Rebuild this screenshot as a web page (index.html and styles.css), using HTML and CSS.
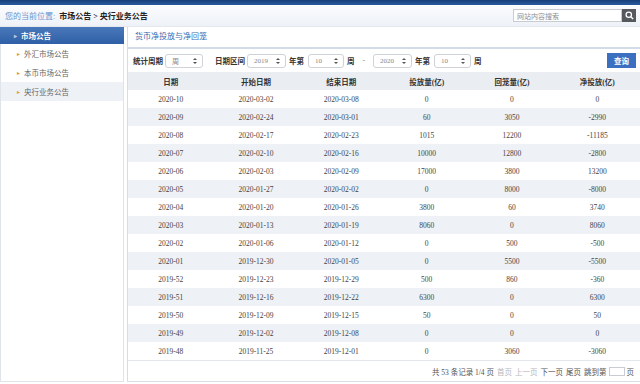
FILE: index.html
```html
<!DOCTYPE html>
<html lang="zh-CN">
<head>
    <meta charset="UTF-8">
    <title>货币净投放与净回笼</title>
    <link rel="stylesheet" href="styles.css">
</head>
<body>
    <div class="topbar"></div>

    <div class="crumbbar">
        <span class="crumb-label">您的当前位置:</span>
        <span class="crumb-path">市场公告 &gt; 央行业务公告</span>
        <div class="search">
            <input type="text" placeholder="网站内容搜索">
            <button class="search-btn">
                <svg width="9" height="9" viewBox="0 0 10 10"><circle cx="4.2" cy="4.2" r="3" fill="none" stroke="#fff" stroke-width="1.4"/><path d="M6.4 6.4 L9 9" stroke="#fff" stroke-width="1.6"/></svg>
            </button>
        </div>
    </div>

    <div class="layout">
        <aside class="sidebar">
            <div class="side-head"><span class="side-arrow">&#9656;</span>市场公告</div>
            <div class="side-item"><span class="bullet">&#9656;</span>外汇市场公告</div>
            <div class="side-item"><span class="bullet">&#9656;</span>本币市场公告</div>
            <div class="side-item current"><span class="bullet">&#9656;</span>央行业务公告</div>
        </aside>

        <main class="panel">
            <div class="panel-head">货币净投放与净回笼</div>

            <div class="filters">
                <span class="lbl">统计周期</span>
                <span class="sel w38">周<i class="spin"></i></span>
                <span class="lbl gap">日期区间</span>
                <span class="sel w39">2019<i class="spin"></i></span>
                <span class="lbl tight">年第</span>
                <span class="sel w36">10<i class="spin"></i></span>
                <span class="lbl tight">周</span>
                <span class="dash">-</span>
                <span class="sel w39">2020<i class="spin"></i></span>
                <span class="lbl tight">年第</span>
                <span class="sel w37">10<i class="spin"></i></span>
                <span class="lbl tight">周</span>
                <button class="query-btn">查询</button>
            </div>

            <table class="data">
                <thead>
                    <tr><th>日期</th><th>开始日期</th><th>结束日期</th><th>投放量(亿)</th><th>回笼量(亿)</th><th>净投放(亿)</th></tr>
                </thead>
                <tbody>
                    <tr><td>2020-10</td><td>2020-03-02</td><td>2020-03-08</td><td>0</td><td>0</td><td>0</td></tr>
                    <tr><td>2020-09</td><td>2020-02-24</td><td>2020-03-01</td><td>60</td><td>3050</td><td>-2990</td></tr>
                    <tr><td>2020-08</td><td>2020-02-17</td><td>2020-02-23</td><td>1015</td><td>12200</td><td>-11185</td></tr>
                    <tr><td>2020-07</td><td>2020-02-10</td><td>2020-02-16</td><td>10000</td><td>12800</td><td>-2800</td></tr>
                    <tr><td>2020-06</td><td>2020-02-03</td><td>2020-02-09</td><td>17000</td><td>3800</td><td>13200</td></tr>
                    <tr><td>2020-05</td><td>2020-01-27</td><td>2020-02-02</td><td>0</td><td>8000</td><td>-8000</td></tr>
                    <tr><td>2020-04</td><td>2020-01-20</td><td>2020-01-26</td><td>3800</td><td>60</td><td>3740</td></tr>
                    <tr><td>2020-03</td><td>2020-01-13</td><td>2020-01-19</td><td>8060</td><td>0</td><td>8060</td></tr>
                    <tr><td>2020-02</td><td>2020-01-06</td><td>2020-01-12</td><td>0</td><td>500</td><td>-500</td></tr>
                    <tr><td>2020-01</td><td>2019-12-30</td><td>2020-01-05</td><td>0</td><td>5500</td><td>-5500</td></tr>
                    <tr><td>2019-52</td><td>2019-12-23</td><td>2019-12-29</td><td>500</td><td>860</td><td>-360</td></tr>
                    <tr><td>2019-51</td><td>2019-12-16</td><td>2019-12-22</td><td>6300</td><td>0</td><td>6300</td></tr>
                    <tr><td>2019-50</td><td>2019-12-09</td><td>2019-12-15</td><td>50</td><td>0</td><td>50</td></tr>
                    <tr><td>2019-49</td><td>2019-12-02</td><td>2019-12-08</td><td>0</td><td>0</td><td>0</td></tr>
                    <tr><td>2019-48</td><td>2019-11-25</td><td>2019-12-01</td><td>0</td><td>3060</td><td>-3060</td></tr>
                </tbody>
            </table>

            <div class="pager">
                <span>共 53 条记录 1/4 页</span>
                <span class="off">首页</span>
                <span class="off">上一页</span>
                <span>下一页</span>
                <span>尾页</span>
                <span>跳到第</span><input type="text" class="jump"><span>页</span>
            </div>
        </main>
    </div>
</body>
</html>
```

FILE: styles.css
```css
body {
    margin: 0;
    width: 640px;
    height: 384px;
    overflow: hidden;
    background: #fff;
    color: #333;
    font-family: "Liberation Serif", "Noto Sans CJK SC", serif;
    font-size: 7.5px;
}
.topbar {
    height: 5px;
    background: linear-gradient(#173f7a, #2a5b9e);
}
.crumbbar {
    height: 22px;
    display: flex;
    align-items: center;
    padding: 0 4px 0 5px;
    background: linear-gradient(#fbfcfe, #eef2f7);
    border-bottom: 1px solid #e4e8ee;
    box-sizing: border-box;
    font-size: 8px;
}
.crumb-label {
    color: #6b93cf;
    margin-right: 4px;
}
.crumb-path {
    font-weight: bold;
    color: #222;
}
.search {
    margin-left: auto;
    display: flex;
    height: 13px;
}
.search input {
    width: 109px;
    height: 13px;
    box-sizing: border-box;
    border: 1px solid #c7ccd3;
    padding: 0 3px;
    font-family: "Noto Sans CJK SC", sans-serif;
    font-size: 7px;
    color: #666;
    outline: none;
}
.search input::placeholder {
    color: #8a8f96;
}
.search-btn {
    width: 14px;
    height: 13px;
    border: none;
    padding: 0;
    background: #55595e;
    display: flex;
    align-items: center;
    justify-content: center;
}
.layout {
    display: flex;
    height: 355px;
}
.sidebar {
    width: 124px;
    box-sizing: border-box;
    border: 1px solid #dfe3ea;
    border-top: none;
}
.side-head {
    height: 17px;
    margin: 0 -1px;
    background: linear-gradient(#4a78bb, #2f5fa5);
    color: #fff;
    font-weight: bold;
    display: flex;
    align-items: center;
    padding-left: 14px;
}
.side-arrow {
    color: #b8cbe8;
    font-size: 6px;
    margin-right: 4px;
}
.side-item {
    height: 19px;
    display: flex;
    align-items: center;
    padding-left: 16px;
    color: #666;
}
.side-item.current {
    background: #eef1f6;
}
.bullet {
    color: #e59b2e;
    font-size: 6px;
    margin-right: 4px;
}
.panel {
    flex: 1;
    margin-left: 3px;
    border-left: 1px solid #d8dde5;
    border-bottom: 1px solid #d8dde5;
    display: flex;
    flex-direction: column;
}
.panel-head {
    height: 20px;
    line-height: 20px;
    padding-left: 7px;
    color: #3a6cb3;
    font-size: 8px;
    border-bottom: 2px solid #d3dbe6;
}
.filters {
    height: 23px;
    display: flex;
    align-items: center;
    padding: 0 4px 0 5px;
}
.lbl {
    font-weight: bold;
    color: #333;
    margin-right: 2px;
}
.lbl.gap {
    margin-left: 12px;
}
.lbl.tight {
    margin-left: 3px;
    margin-right: 4px;
}
.dash {
    color: #888;
    margin: 0 8px 0 4px;
}
.sel {
    position: relative;
    height: 14px;
    box-sizing: border-box;
    border: 1px solid #cfd3d8;
    border-radius: 3px;
    padding-left: 6px;
    display: flex;
    align-items: center;
    color: #888;
    font-size: 7px;
}
.w36 { width: 36px; }
.w37 { width: 37px; }
.w38 { width: 38px; }
.w39 { width: 39px; }
.spin {
    position: absolute;
    right: 5px;
    top: 3px;
    width: 0;
    height: 0;
    border-left: 2px solid transparent;
    border-right: 2px solid transparent;
    border-bottom: 2.5px solid #555;
}
.spin::after {
    content: "";
    position: absolute;
    left: -2px;
    top: 4px;
    border-left: 2px solid transparent;
    border-right: 2px solid transparent;
    border-top: 2.5px solid #555;
}
.query-btn {
    margin-left: auto;
    width: 29px;
    height: 15px;
    border: none;
    padding: 0;
    background: #3b6fbf;
    color: #fff;
    font-family: "Noto Sans CJK SC", sans-serif;
    font-size: 7.5px;
    font-weight: bold;
}
.data {
    width: 100%;
    border-collapse: collapse;
    table-layout: fixed;
    border-bottom: 1px solid #e3e6eb;
}
.data th, .data td {
    height: 18px;
    padding: 0;
    text-align: center;
}
.data th {
    background: #eaedf2;
    font-weight: bold;
    color: #333;
}
.data td {
    color: #444;
}
.data tbody tr:nth-child(even) td {
    background: #eef1f6;
}
.pager {
    height: 20px;
    display: flex;
    align-items: center;
    justify-content: flex-end;
    gap: 3px;
    padding-right: 6px;
    color: #555;
    font-size: 7.5px;
}
.pager .off {
    color: #b5b8bd;
}
.jump {
    width: 16px;
    height: 9px;
    box-sizing: border-box;
    border: 1px solid #c9cdd3;
    padding: 0;
    margin: 0 -1px;
}
```
